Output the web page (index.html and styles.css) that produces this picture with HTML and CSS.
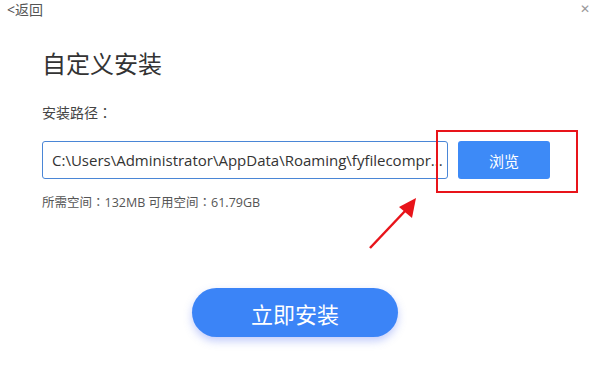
FILE: index.html
```html
<!doctype html>
<html>
<head>
<meta charset="utf-8">
<title>自定义安装</title>
<link rel="stylesheet" href="styles.css">
</head>
<body>
<div class="top">
	<span class="back">&lt;返回</span>
	<span class="close">&#x2715;</span>
</div>
<div class="main">
	<h1>自定义安装</h1>
	<p class="label">安装路径<span class="colon">：</span></p>
	<div class="path-row">
		<div class="path">C:\Users\Administrator\AppData\Roaming\fyfilecompr...</div>
		<button class="browse" type="button">浏览</button>
	</div>
	<p class="space">所需空间<span class="colon">：</span>132MB 可用空间<span class="colon">：</span>61.79GB</p>
	<div class="install-wrap">
		<button class="install" type="button">立即安装</button>
	</div>
</div>
<div class="mark"></div>
<svg class="arrow" width="60" height="60" viewBox="0 0 60 60">
	<line x1="4" y1="54" x2="40" y2="16" stroke="#e8141a" stroke-width="2.5"/>
	<polygon points="50,4 46,24 33,13" fill="#e8141a"/>
</svg>
</body>
</html>
```

FILE: styles.css
```css
body {
	margin:0;
	background:#fff;
	font-family:"Open Sans","Noto Sans CJK SC",sans-serif;
	color:#333;
	width:600px;
	height:392px;
	overflow:hidden;
	position:relative;
}
.top {
	display:flex;
	justify-content:space-between;
	padding:0 10px 0 7px;
	height:20px;
}
.back {
	font-size:14px;
	color:#555;
	line-height:19px;
}
.close {
	font-size:12px;
	color:#999;
	line-height:18px;
}
.main {
	padding-left:42px;
}
h1 {
	font-size:24px;
	font-weight:normal;
	margin:24px 0 0 0;
	line-height:40px;
	color:#333;
}
.label {
	font-size:14px;
	margin:18px 0 0 0;
	line-height:20px;
	color:#444;
}
.colon {
	font-family:"Noto Sans CJK TC",sans-serif;
}
.path-row {
	display:flex;
	gap:10px;
	margin-top:18px;
	height:38px;
}
.path {
	box-sizing:border-box;
	width:406px;
	border:1px solid #4a86d6;
	border-radius:3px;
	padding:0 0 0 9px;
	font-size:15px;
	line-height:36px;
	color:#333;
	white-space:nowrap;
	overflow:hidden;
}
.browse {
	width:92px;
	border:none;
	border-radius:3px;
	background:#3d8af7;
	color:#fff;
	font-family:inherit;
	font-size:15px;
}
.space {
	font-size:12.5px;
	color:#555;
	margin:14px 0 0 0;
	line-height:18px;
}
.install-wrap {
	margin-top:76px;
	padding-left:150px;
}
.install {
	width:206px;
	height:49px;
	border:none;
	border-radius:25px;
	background:#3b84f7;
	color:#fff;
	font-family:inherit;
	font-size:22px;
	box-shadow:0 4px 8px rgba(80,110,240,0.35);
}
.mark {
	position:absolute;
	left:436px;
	top:130px;
	width:138px;
	height:59px;
	border:2px solid #e8141a;
}
.arrow {
	position:absolute;
	left:366px;
	top:194px;
}
```
